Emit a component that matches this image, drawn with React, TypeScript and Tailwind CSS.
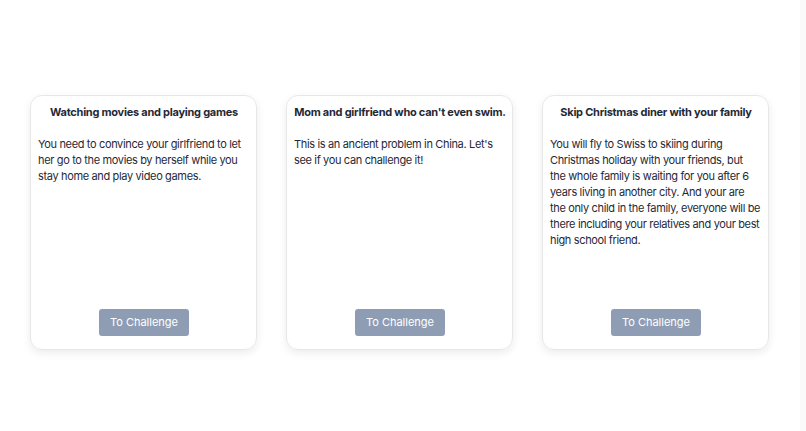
import React from "react";

const cards: { title: string; body: React.ReactNode }[] = [
  {
    title: "Watching movies and playing games",
    body: "You need to convince your girlfriend to let her go to the movies by herself while you stay home and play video games.",
  },
  {
    title: "Mom and girlfriend who can't even swim.",
    body: "This is an ancient problem in China. Let's see if you can challenge it!",
  },
  {
    title: "Skip Christmas diner with your family",
    body: (
      <>
        You will fly to Swiss to skiing during Christmas holiday with your friends, but
        <br />
        the whole family is waiting for you after 6 years living in another city. And your are the only child in the
        family, everyone will be there including your relatives and your best high school friend.
      </>
    ),
  },
];

export default function App() {
  return (
    <div className="w-[806px] h-[431px] bg-white flex font-['Inter',sans-serif] text-[#1f2937]">
      <div className="w-[800px] h-full flex gap-[29px] pl-[30px] pt-[95px]">
        {cards.map((c) => (
          <div
            key={c.title}
            className="w-[227px] h-[255px] flex flex-col border border-[#e5e7eb] rounded-[12px] shadow-[0_3px_8px_rgba(0,0,0,0.08)] pl-[7px] pr-[6px] pt-[8px] pb-[13px]"
          >
            <div className="text-[11px] leading-[16px] font-bold tracking-[-0.25px] text-center text-[#1f2937] whitespace-nowrap">
              {c.title}
            </div>
            <p className="mt-[16px] text-[11px] leading-[16px] tracking-[-0.35px] text-[#1f2937]">{c.body}</p>
            <div className="mt-auto flex justify-center">
              <button className="w-[90px] h-[27px] rounded-[3px] bg-[#8f9db4] text-white text-[11px]">
                To Challenge
              </button>
            </div>
          </div>
        ))}
      </div>
      <div className="w-[6px] h-full bg-[#fafafa]" />
    </div>
  );
}
